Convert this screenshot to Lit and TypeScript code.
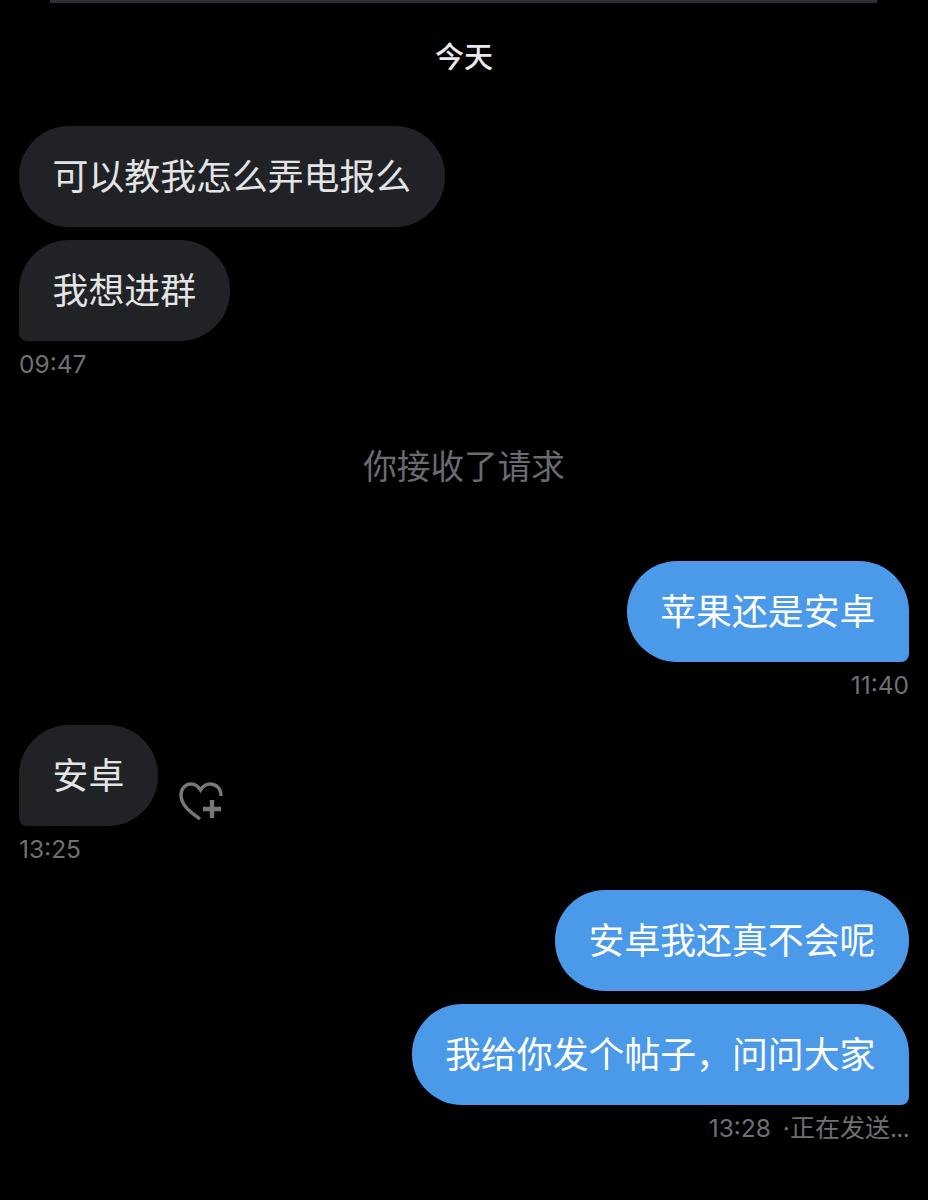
import { LitElement, html, css } from "lit";
import { customElement } from "lit/decorators.js";

@customElement("app-root")
export class AppRoot extends LitElement {
  static styles = css`
    :host {
      display: block;
      width: 928px;
      height: 1200px;
      background: #000;
      overflow: hidden;
      font-family: "Liberation Sans", "Noto Sans CJK SC", sans-serif;
    }
    .page { display: flex; flex-direction: column; height: 1200px; padding: 0 19px; box-sizing: border-box; }
    .rule { height: 3px; margin: 0 32px 0 31px; background: #2f3036; flex: none; }
    .day {
      margin-top: 35px; height: 40px; line-height: 40px; text-align: center;
      color: #e7e9ea; font-size: 29px; font-weight: 500;
    }
    .bubble {
      box-sizing: border-box; height: 101px; line-height: 105px; padding: 0 33.6px;
      border-radius: 50px; font-size: 35.875px; white-space: nowrap;
    }
    .in { background: #212225; color: #e2e4e5; }
    .out { background: #4b99e9; color: #fff; }
    .in.tail { border-bottom-left-radius: 8px; }
    .out.tail { border-bottom-right-radius: 8px; }
    .left { display: flex; flex-direction: column; align-items: flex-start; }
    .right { display: flex; flex-direction: column; align-items: flex-end; }
    .stack { gap: 13px; }
    .time {
      color: #6e7074; font-family: "Inter", "Noto Sans CJK SC", sans-serif;
      font-size: 24.5px; line-height: 32px; height: 32px; white-space: nowrap; margin-top: 7px;
    }
    .sending { word-spacing: 5px; }
    .cjk { font-size: 25px; }
    .dots { letter-spacing: -0.7px; }
    .notice { text-align: center; color: #6a6b70; font-size: 33.6px; line-height: 44px; height: 44px; padding-top: 1px; margin-bottom: -1px; }
    .row { display: flex; align-items: flex-end; }
    .heart { width: 46px; height: 42px; margin: 0 0 3px 20px; flex: none; }
    .m-first { margin-top: 48px; }
    .m-notice { margin-top: 65px; }
    .m-out1 { margin-top: 72px; }
    .m-gap { margin-top: 24px; }
    .m-gap2 { margin-top: 25px; }
  `;

  render() {
    return html`
      <div class="page">
        <div class="rule"></div>
        <div class="day">今天</div>

        <div class="left stack m-first">
          <div class="bubble in">可以教我怎么弄电报么</div>
          <div class="bubble in tail">我想进群</div>
        </div>
        <div class="left"><div class="time">09:47</div></div>

        <div class="notice m-notice">你接收了请求</div>

        <div class="right m-out1">
          <div class="bubble out tail">苹果还是安卓</div>
          <div class="time">11:40</div>
        </div>

        <div class="left m-gap">
          <div class="row">
            <div class="bubble in tail">安卓</div>
            <svg class="heart" viewBox="0 0 46 42" fill="none" stroke="#76777b" stroke-width="3.4">
              <path d="M22 38 C14 32 3 25 3 14 C3 7 8 3 13 3 C17 3 20 5 22.5 9 C25 5 28 3 32 3 C38 3 43 7 43 15" />
              <path d="M34 19 V37 M25 28 H43" stroke-width="4.4" />
            </svg>
          </div>
          <div class="time">13:25</div>
        </div>

        <div class="right stack m-gap2">
          <div class="bubble out">安卓我还真不会呢</div>
          <div class="bubble out tail">我给你发个帖子，问问大家</div>
        </div>
        <div class="right"><div class="time sending">13:28 ·<span class="cjk">正在发送</span><span class="dots">...</span></div></div>
      </div>
    `;
  }
}
